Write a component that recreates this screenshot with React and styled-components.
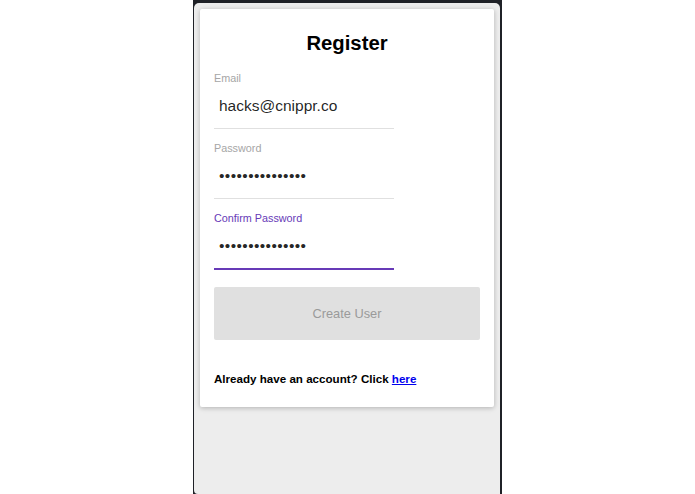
import React from "react";
import styled, { createGlobalStyle } from "styled-components";

const Global = createGlobalStyle`
  html, body { margin: 0; padding: 0; background: #ffffff; overflow: hidden; }
  body { font-family: "Liberation Sans", Arial, Helvetica, sans-serif; }
  * { box-sizing: border-box; }
`;

const Page = styled.div`
  display: flex;
  justify-content: center;
  width: 100%;
  height: 494px;
`;

const Device = styled.div`
  width: 309px;
  height: 494px;
  background: #1f2127;
  padding: 3px 2px 0 1px;
  display: flex;
`;

const Screen = styled.div`
  flex: 1;
  background: #ededed;
  border-radius: 5px 5px 0 4px;
  padding: 6px;
`;

const Card = styled.div`
  background: #ffffff;
  border-radius: 2px;
  box-shadow: 0 1px 6px rgba(0, 0, 0, 0.12), 0 1px 4px rgba(0, 0, 0, 0.14);
  padding: 23px 14px 21px;
  display: flex;
  flex-direction: column;
`;

const Title = styled.h1`
  margin: 0 0 17px;
  text-align: center;
  font-size: 20.3px;
  line-height: 23px;
  font-weight: 700;
  color: #000;
`;

const Field = styled.label`
  display: flex;
  flex-direction: column;
  width: 180px;
  padding-bottom: 12px;
  border-bottom: ${(p) => (p.$focused ? "2px solid #673ab7" : "1px solid #e0e0e0")};
  margin-bottom: ${(p) => (p.$focused ? 0 : 13)}px;
`;

const Label = styled.span`
  font-size: 10.8px;
  line-height: 13px;
  color: ${(p) => (p.$focused ? "#673ab7" : "#a6a6a6")};
  margin-bottom: 11px;
`;

const Input = styled.input`
  border: none;
  outline: none;
  background: transparent;
  padding: 0 0 0 5px;
  margin: 0;
  height: 20px;
  font-family: "Liberation Sans", Arial, Helvetica, sans-serif;
  font-size: 15.5px;
  line-height: 20px;
  color: rgba(0, 0, 0, 0.87);
  letter-spacing: ${(p) => (p.type === "password" ? "0.4px" : "0")};
`;

const Button = styled.button`
  margin-top: 17px;
  height: 53px;
  width: 100%;
  border: none;
  border-radius: 2px;
  background: #e0e0e0;
  color: #9a9a9a;
  font-family: "Liberation Sans", Arial, Helvetica, sans-serif;
  font-size: 12.8px;
  cursor: default;
`;

const Footer = styled.p`
  margin: 31px 0 0;
  font-size: 11.6px;
  line-height: 15px;
  font-weight: 700;
  color: #000;
`;

const Link = styled.a`
  color: #0000ee;
  text-decoration: underline;
`;

function TextField({ label, value, type = "text", focused }) {
  return (
    <Field $focused={focused}>
      <Label $focused={focused}>{label}</Label>
      <Input type={type} value={value} readOnly />
    </Field>
  );
}

export default function App() {
  return (
    <>
      <Global />
      <Page>
        <Device>
          <Screen>
            <Card>
              <Title>Register</Title>
              <TextField label="Email" value="hacks@cnippr.co" />
              <TextField label="Password" type="password" value="passwordpasswor" />
              <TextField label="Confirm Password" type="password" value="passwordpasswor" focused />
              <Button type="button">Create User</Button>
              <Footer>
                Already have an account? Click <Link href="#">here</Link>
              </Footer>
            </Card>
          </Screen>
        </Device>
      </Page>
    </>
  );
}
